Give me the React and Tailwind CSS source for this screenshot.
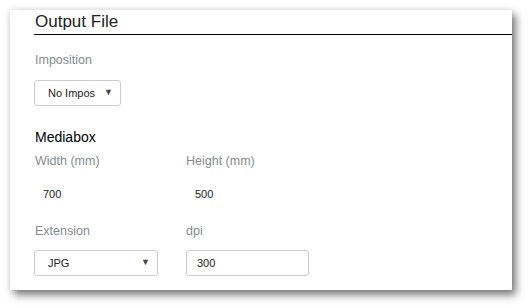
import React from 'react';

function Label({ children, className = '' }) {
  return <div className={`text-[12.5px] leading-[20px] text-[#868b90] ${className}`}>{children}</div>;
}

function Select({ value, width, padLeft }) {
  return (
    <div
      className={`flex items-center justify-between h-[26px] border border-[#cccccc] rounded-[3px] bg-white text-[11px] text-[#222] ${width} ${padLeft} pr-[7px]`}
    >
      <span>{value}</span>
      <span className="text-[9px] text-[#444]">▼</span>
    </div>
  );
}

export default function App() {
  return (
    <div className="w-[530px] h-[308px] bg-white pt-[10px] pl-[10px] font-['Liberation_Sans',Arial,sans-serif]">
      <div className="w-[502px] h-[280px] bg-white shadow-[4px_5px_8px_rgba(0,0,0,0.5),0_0_6px_rgba(0,0,0,0.12)] pl-[24px]">
        <div className="border-b border-black text-[17px] leading-[24px] text-[#222] pl-[1px] h-[25px]">
          Output File
        </div>

        <Label className="mt-[15px] pl-[1px]">Imposition</Label>
        <div className="mt-[10px]">
          <Select value="No Impos" width="w-[87px]" padLeft="pl-[13px]" />
        </div>

        <div className="mt-[21px] text-[14px] leading-[20px] text-black pl-[1px]">Mediabox</div>
        <div className="flex mt-[4px]">
          <div className="w-[152px]">
            <Label className="pl-[1px]">Width (mm)</Label>
            <div className="mt-[10px] h-[26px] flex items-center pl-[9px] text-[11px] text-[#222]">700</div>
          </div>
          <div>
            <Label>Height (mm)</Label>
            <div className="mt-[10px] h-[26px] flex items-center pl-[9px] text-[11px] text-[#222]">500</div>
          </div>
        </div>

        <div className="flex mt-[14px]">
          <div className="w-[152px]">
            <Label className="pl-[1px]">Extension</Label>
            <div className="mt-[9px]">
              <Select value="JPG" width="w-[124px]" padLeft="pl-[13px]" />
            </div>
          </div>
          <div>
            <Label>dpi</Label>
            <div className="mt-[9px] w-[123px] h-[26px] border border-[#cccccc] rounded-[3px] flex items-center pl-[10px] text-[11px] text-[#222]">
              300
            </div>
          </div>
        </div>
      </div>
    </div>
  );
}
